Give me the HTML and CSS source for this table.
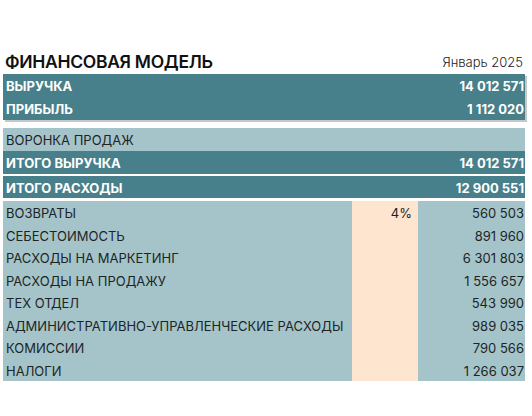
FILE: index.html
```html
<!DOCTYPE html>
<html lang="ru">
<head>
    <meta charset="UTF-8">
    <meta name="viewport" content="width=device-width, initial-scale=1.0">
    <title>Финансовая модель</title>
    <link rel="stylesheet" href="styles.css">
</head>
<body>

    <div class="sheet">
        <!-- Title -->
        <div class="title-row">
            <h1>ФИНАНСОВАЯ МОДЕЛЬ</h1>
            <span class="period">Январь 2025</span>
        </div>

        <!-- Summary -->
        <div class="summary">
            <div class="row dark"><span>ВЫРУЧКА</span><span>14 012 571</span></div>
            <div class="row dark"><span>ПРИБЫЛЬ</span><span>1 112 020</span></div>
        </div>

        <!-- Sales funnel -->
        <div class="funnel">
            <div class="row light"><span>ВОРОНКА ПРОДАЖ</span></div>
            <div class="row dark"><span>ИТОГО ВЫРУЧКА</span><span>14 012 571</span></div>
            <div class="row dark gap"><span>ИТОГО РАСХОДЫ</span><span>12 900 551</span></div>

            <div class="costs">
                <div class="cost"><span class="name">ВОЗВРАТЫ</span><span class="pct">4%</span><span class="val">560 503</span></div>
                <div class="cost"><span class="name">СЕБЕСТОИМОСТЬ</span><span class="pct"></span><span class="val">891 960</span></div>
                <div class="cost"><span class="name">РАСХОДЫ НА МАРКЕТИНГ</span><span class="pct"></span><span class="val">6 301 803</span></div>
                <div class="cost"><span class="name">РАСХОДЫ НА ПРОДАЖУ</span><span class="pct"></span><span class="val">1 556 657</span></div>
                <div class="cost"><span class="name">ТЕХ ОТДЕЛ</span><span class="pct"></span><span class="val">543 990</span></div>
                <div class="cost"><span class="name">АДМИНИСТРАТИВНО-УПРАВЛЕНЧЕСКИЕ РАСХОДЫ</span><span class="pct"></span><span class="val">989 035</span></div>
                <div class="cost"><span class="name">КОМИССИИ</span><span class="pct"></span><span class="val">790 566</span></div>
                <div class="cost"><span class="name">НАЛОГИ</span><span class="pct"></span><span class="val">1 266 037</span></div>
            </div>
        </div>
    </div>

</body>
</html>
```

FILE: styles.css
```css
* {
    margin: 0;
    padding: 0;
    box-sizing: border-box;
}
body {
    font-family: Inter, "Noto Sans", sans-serif;
    background: white;
    color: #1e2426;
    font-size: 13px;
}
.sheet {
    width: 522px;
    margin-left: 3px;
    padding-top: 48px;
}
.title-row {
    display: flex;
    justify-content: space-between;
    align-items: flex-end;
    height: 26px;
    padding: 0 2px 4px 2px;
}
h1 {
    font-size: 17.5px;
    font-weight: 600;
    color: #111;
    line-height: 1;
    letter-spacing: -0.3px;
}
.period {
    font-size: 13px;
    font-weight: 300;
    line-height: 1;
    color: #222;
    padding-bottom: 1px;
}
.summary {
    box-shadow: 2px 2px 0 #c6c8c8;
    margin-bottom: 8px;
}
.row {
    display: flex;
    justify-content: space-between;
    align-items: center;
    height: 23px;
    padding: 1px 1px 0 3px;
}
.dark {
    background: #477f8a;
    color: white;
    font-weight: 700;
}
.light {
    background: #a4c4c9;
}
.gap {
    margin-top: 2px;
    height: 22px;
}
.costs {
    margin-top: 3px;
    background: #a4c4c9;
}
.cost {
    display: grid;
    grid-template-columns: 349px 66px 1fr;
    height: 22.5px;
    align-items: stretch;
}
.cost span {
    display: flex;
    align-items: center;
    padding-top: 2px;
}
.name {
    padding-left: 3px;
    white-space: nowrap;
}
.pct {
    background: #fde5cf;
    justify-content: flex-end;
    padding-right: 6px;
}
.val {
    justify-content: flex-end;
    padding-right: 1px;
}
```
